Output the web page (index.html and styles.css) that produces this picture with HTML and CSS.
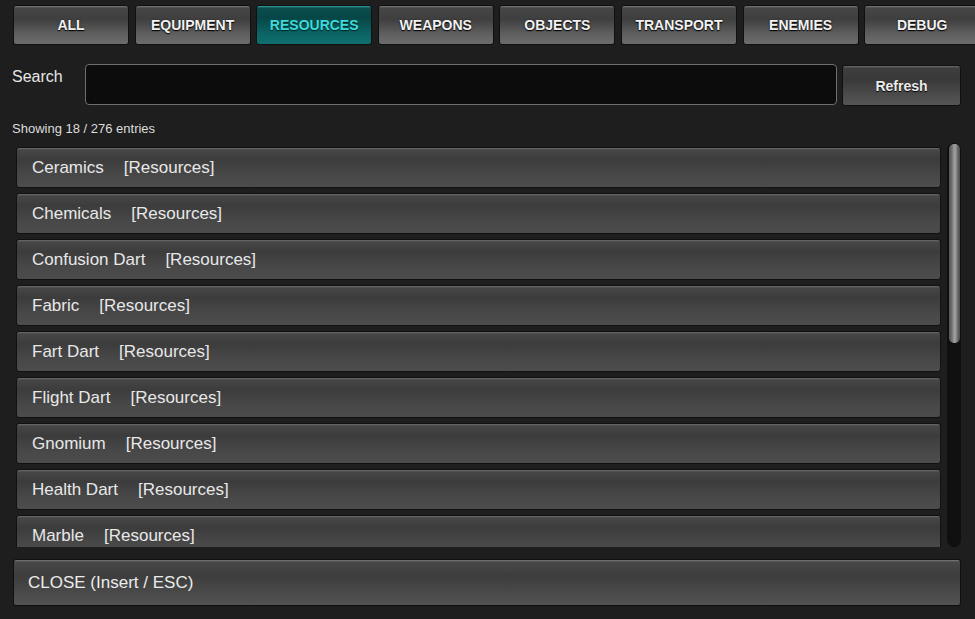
FILE: index.html
```html
<!DOCTYPE html>
<html lang="en">
<head>
    <meta charset="UTF-8">
    <title>Spawn Menu</title>
    <link rel="stylesheet" href="styles.css">
</head>
<body>
    <!-- Category tabs -->
    <div class="tabs">
        <div class="tab">ALL</div>
        <div class="tab">EQUIPMENT</div>
        <div class="tab active">RESOURCES</div>
        <div class="tab">WEAPONS</div>
        <div class="tab">OBJECTS</div>
        <div class="tab">TRANSPORT</div>
        <div class="tab">ENEMIES</div>
        <div class="tab">DEBUG</div>
    </div>

    <!-- Search -->
    <div class="search-row">
        <label class="search-label" for="search">Search</label>
        <input class="search-input" id="search" type="text">
        <div class="btn refresh">Refresh</div>
    </div>

    <div class="count">Showing 18 / 276 entries</div>

    <!-- Entry list -->
    <div class="list-wrap">
        <div class="list">
            <div class="entry"><span class="name">Ceramics</span><span class="cat">[Resources]</span></div>
            <div class="entry"><span class="name">Chemicals</span><span class="cat">[Resources]</span></div>
            <div class="entry"><span class="name">Confusion Dart</span><span class="cat">[Resources]</span></div>
            <div class="entry"><span class="name">Fabric</span><span class="cat">[Resources]</span></div>
            <div class="entry"><span class="name">Fart Dart</span><span class="cat">[Resources]</span></div>
            <div class="entry"><span class="name">Flight Dart</span><span class="cat">[Resources]</span></div>
            <div class="entry"><span class="name">Gnomium</span><span class="cat">[Resources]</span></div>
            <div class="entry"><span class="name">Health Dart</span><span class="cat">[Resources]</span></div>
            <div class="entry"><span class="name">Marble</span><span class="cat">[Resources]</span></div>
        </div>
        <div class="scrollbar">
            <div class="thumb"></div>
        </div>
    </div>

    <div class="btn close">CLOSE (Insert / ESC)</div>
</body>
</html>
```

FILE: styles.css
```css
body {
    margin: 0;
    padding: 5px 14px 0 13px;
    background: #1e1e1e;
    font-family: "Liberation Sans", Arial, sans-serif;
    color: #e6e6e6;
}

/* tabs */
.tabs {
    display: flex;
    gap: 5.6px;
    margin-right: -14px;
    overflow: hidden;
}
.tab {
    flex: 0 0 116px;
    height: 40px;
    box-sizing: border-box;
    display: flex;
    justify-content: center;
    align-items: center;
    border: 1px solid #101010;
    border-radius: 3px;
    background: linear-gradient(#7a7a7a 0, #464646 2px, #3f3f3f 35%, #606060 75%, #6c6c6c 100%);
    font-size: 14px;
    font-weight: bold;
    color: #f2f2f2;
    text-shadow: 0 1px 1px #000, 0 0 2px #222;
}
.tab.active {
    background: linear-gradient(#3aa5a5 0, #0a4d4d 2px, #074646 30%, #0c6565 75%, #0f6e6e 100%);
    color: #3fd9d9;
    text-shadow: 0 1px 1px #022;
}

/* search */
.search-row {
    display: flex;
    align-items: flex-start;
    margin-top: 19px;
}
.search-label {
    width: 73px;
    padding-top: 4px;
    margin-left: -1px;
    font-size: 16px;
    color: #e6e6e6;
}
.search-input {
    flex: 1;
    height: 41px;
    box-sizing: border-box;
    background: #0c0c0c;
    border: 1px solid #6e6e6e;
    border-radius: 4px;
    outline: none;
    color: #ddd;
    margin: 0;
}
.btn {
    box-sizing: border-box;
    border: 1px solid #101010;
    border-radius: 3px;
    background: linear-gradient(#6e6e6e 0, #3e3e3e 2px, #393939 35%, #4e4e4e 80%, #555 100%);
    color: #ececec;
}
.refresh {
    width: 119px;
    height: 41px;
    margin-left: 5px;
    margin-top: 1px;
    display: flex;
    justify-content: center;
    align-items: center;
    font-size: 14px;
    font-weight: bold;
    text-shadow: 0 1px 1px #000;
}

.count {
    font-size: 13px;
    margin: 15px 0 0 -1px;
    color: #dcdcdc;
}

/* list */
.list-wrap {
    display: flex;
    gap: 6px;
    margin: 7px 0 0 3px;
    height: 404px;
}
.list {
    flex: 1;
    padding-top: 4px;
    display: flex;
    flex-direction: column;
    gap: 5px;
    overflow: hidden;
}
.entry {
    flex: 0 0 41px;
    box-sizing: border-box;
    display: flex;
    align-items: center;
    padding-left: 15px;
    border: 1px solid #111;
    border-radius: 3px;
    background: linear-gradient(#6c6c6c 0, #464646 2px, #3c3c3c 30%, #484848 70%, #4c4c4c 100%);
    font-size: 17px;
    color: #e8e8e8;
}
.name {
    margin-right: 20px;
}
.scrollbar {
    flex: 0 0 14px;
    background: #0f0f0f;
    border-radius: 7px;
    display: flex;
    justify-content: center;
}
.thumb {
    width: 11px;
    height: 199px;
    margin-top: 1px;
    border-radius: 5px;
    background: linear-gradient(90deg, #555 0, #6e6e6e 25%, #9a9a9a 45%, #9a9a9a 60%, #666 80%, #4a4a4a 100%);
}

.close {
    height: 47px;
    margin-top: 12px;
    padding-left: 14px;
    line-height: 45px;
    font-size: 17px;
    background: linear-gradient(#7a7a7a 0, #484848 2px, #3d3d3d 35%, #4c4c4c 80%, #525252 100%);
}
```
